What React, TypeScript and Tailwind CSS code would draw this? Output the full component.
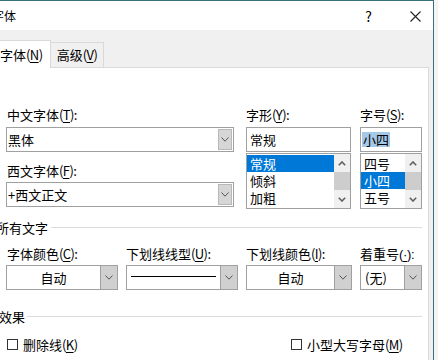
import React from "react";

const Chevron = () => (
  <svg width="8" height="5" viewBox="0 0 8 5" className="block">
    <path d="M0.5 0.5 L4 4.2 L7.5 0.5" fill="none" stroke="#555" strokeWidth="1" />
  </svg>
);

const ArrowUp = () => (
  <svg width="8" height="5" viewBox="0 0 8 5" className="block">
    <path d="M0.8 4.3 L4 1 L7.2 4.3" fill="none" stroke="#606060" strokeWidth="1.6" />
  </svg>
);

const ArrowDown = () => (
  <svg width="8" height="5" viewBox="0 0 8 5" className="block">
    <path d="M0.8 0.7 L4 4 L7.2 0.7" fill="none" stroke="#606060" strokeWidth="1.6" />
  </svg>
);

const Acc = ({ k }: { k: string }) => (
  <span className="tracking-[-0.6px]">
    (<span className="underline underline-offset-[2px] decoration-1">{k}</span>)
  </span>
);

const Label = ({ children }: { children: React.ReactNode }) => (
  <div className="h-[17px] leading-[17px] whitespace-nowrap">{children}</div>
);

const EditCombo = ({ text, width }: { text: string; width: string }) => (
  <div className={`${width} h-[25px] border border-[#a0a0a0] bg-white flex`}>
    <div className="flex-1 flex items-center pl-[1px] whitespace-nowrap">{text}</div>
    <div className="w-[14px] my-[1px] mr-[1px] bg-[#d6d6d6] border border-[#b8b8b8] flex items-center justify-center">
      <Chevron />
    </div>
  </div>
);

const DropCombo = ({
  children,
  width,
  center,
}: {
  children: React.ReactNode;
  width: string;
  center?: boolean;
}) => (
  <div className={`${width} h-[25px] border border-[#a0a0a0] bg-white flex`}>
    <div
      className={`flex-1 flex items-center whitespace-nowrap ${center ? "justify-center" : "pl-[4px]"}`}
    >
      {children}
    </div>
    <div className="w-[17px] bg-[#d0d0d0] border-l border-[#a0a0a0] flex items-center justify-center">
      <Chevron />
    </div>
  </div>
);

const ListBox = ({ items, selected }: { items: string[]; selected: number }) => (
  <div className="mt-[1px] h-[56px] border border-[#a0a0a0] bg-white flex">
    <div className="flex-1 flex flex-col pt-[1px]">
      {items.map((it, i) => (
        <div
          key={it}
          className={`h-[17px] leading-[17px] pl-[3px] whitespace-nowrap overflow-hidden ${
            i === selected ? "bg-[#0078d7] text-white" : ""
          }`}
        >
          {it}
        </div>
      ))}
    </div>
    <div className="w-[16px] flex flex-col bg-[#f0f0f0]">
      <div className="h-[18px] flex items-center justify-center">
        <ArrowUp />
      </div>
      <div className="h-[18px] bg-[#cdcdcd]" />
      <div className="h-[18px] flex items-center justify-center">
        <ArrowDown />
      </div>
    </div>
  </div>
);

const Check = ({ children }: { children: React.ReactNode }) => (
  <div className="flex items-center h-[17px]">
    <div className="w-[11px] h-[11px] border border-[#333] bg-white" />
    <span className="ml-[5px] leading-[17px] whitespace-nowrap">{children}</span>
  </div>
);

export default function App() {
  return (
    <div className="w-[438px] h-[360px] overflow-hidden bg-[#f4f4f4] flex font-['Noto_Sans_CJK_SC','Microsoft_YaHei',sans-serif] text-[13px] text-black">
      <div className="w-[434px] h-full shrink-0 flex flex-col border-t border-r border-[#3a6f7f] bg-[#f0f0f0]">
        {/* title bar */}
        <div className="h-[29px] shrink-0 bg-white flex items-center">
          <span className="ml-[-8px] text-[12px] leading-[16px] whitespace-nowrap">字体</span>
          <span className="ml-auto mr-[38px] text-[14px] leading-[16px]">?</span>
          <svg width="11" height="11" viewBox="0 0 11 11" className="mr-[12px] mt-[1px]">
            <path d="M0.5 0.5 L10.5 10.5 M10.5 0.5 L0.5 10.5" stroke="#222" strokeWidth="1.1" />
          </svg>
        </div>

        {/* tab strip */}
        <div className="h-[37px] shrink-0 flex items-end">
          <div className="relative z-10 ml-[-2px] mb-[-1px] w-[53px] h-[28px] bg-white border border-b-0 border-[#d9d9d9] flex items-center pl-[1px] whitespace-nowrap">
            字体<Acc k="N" />
          </div>
          <div className="w-[53px] h-[25px] border border-l-0 border-b-0 border-[#d9d9d9] flex items-center justify-center whitespace-nowrap">
            高级<Acc k="V" />
          </div>
        </div>

        {/* panel */}
        <div className="flex-1 ml-[-1px] w-[430px] bg-white border border-b-0 border-[#d9d9d9] flex flex-col pt-[38px]">
          {/* top area */}
          <div className="flex items-start">
            <div className="ml-[6px] w-[228px] flex flex-col">
              <div className="pl-[1px]">
                <Label>
                  中文字体<Acc k="T" />:
                </Label>
              </div>
              <div className="mt-[4px]">
                <EditCombo text="黑体" width="w-[228px]" />
              </div>
              <div className="mt-[10px] pl-[1px]">
                <Label>
                  西文字体<Acc k="F" />:
                </Label>
              </div>
              <div className="mt-[3px]">
                <EditCombo text="+西文正文" width="w-[228px]" />
              </div>
            </div>

            <div className="ml-[12px] w-[105px] flex flex-col">
              <Label>
                字形<Acc k="Y" />:
              </Label>
              <div className="mt-[4px] h-[25px] border border-[#a0a0a0] bg-white flex items-center pl-[3px]">
                常规
              </div>
              <ListBox items={["常规", "倾斜", "加粗"]} selected={0} />
            </div>

            <div className="ml-[9px] w-[62px] flex flex-col">
              <Label>
                字号<Acc k="S" />:
              </Label>
              <div className="mt-[4px] h-[25px] border border-[#a0a0a0] bg-white flex items-center pl-[1px]">
                <span className="bg-[#a6c8e8] leading-[15px] px-[1px]">小四</span>
              </div>
              <ListBox items={["四号", "小四", "五号"]} selected={1} />
            </div>
          </div>

          {/* 所有文字 header */}
          <div className="mt-[10px] flex items-center h-[17px] mr-[6px]">
            <span className="ml-[-4px] leading-[17px] whitespace-nowrap">所有文字</span>
            <div className="ml-[3px] flex-1 h-px bg-[#dcdcdc]" />
          </div>

          {/* color row */}
          <div className="mt-[9px] flex items-start">
            <div className="ml-[6px] w-[112px] flex flex-col">
              <div className="pl-[1px]">
                <Label>
                  字体颜色<Acc k="C" />:
                </Label>
              </div>
              <div className="mt-[3px]">
                <DropCombo width="w-[112px]" center>
                  自动
                </DropCombo>
              </div>
            </div>
            <div className="ml-[8px] w-[112px] flex flex-col">
              <Label>
                下划线线型<Acc k="U" />:
              </Label>
              <div className="mt-[3px]">
                <DropCombo width="w-[112px]">
                  <div className="w-[85px] h-px bg-black mt-[-2px]" />
                </DropCombo>
              </div>
            </div>
            <div className="ml-[8px] w-[106px] flex flex-col">
              <Label>
                下划线颜色<Acc k="I" />:
              </Label>
              <div className="mt-[3px]">
                <DropCombo width="w-[106px]" center>
                  自动
                </DropCombo>
              </div>
            </div>
            <div className="ml-[8px] w-[62px] flex flex-col">
              <Label>
                着重号
                <span className="font-['Liberation_Sans',sans-serif] tracking-[-0.3px]">
                  (<span className="underline underline-offset-[2px] decoration-1">·</span>):
                </span>
              </Label>
              <div className="mt-[3px]">
                <DropCombo width="w-[62px]">(无)</DropCombo>
              </div>
            </div>
          </div>

          {/* 效果 header */}
          <div className="mt-[18px] flex items-center h-[17px] mr-[6px]">
            <span className="ml-[-1px] leading-[17px] whitespace-nowrap">效果</span>
            <div className="ml-[2px] flex-1 h-px bg-[#dcdcdc]" />
          </div>

          {/* checkboxes */}
          <div className="mt-[11px] grid grid-cols-[291px_1fr]">
            <div className="pl-[7px]">
              <Check>
                删除线<Acc k="K" />
              </Check>
            </div>
            <div>
              <Check>
                小型大写字母<Acc k="M" />
              </Check>
            </div>
          </div>
        </div>
      </div>
      <div className="flex-1" />
    </div>
  );
}
